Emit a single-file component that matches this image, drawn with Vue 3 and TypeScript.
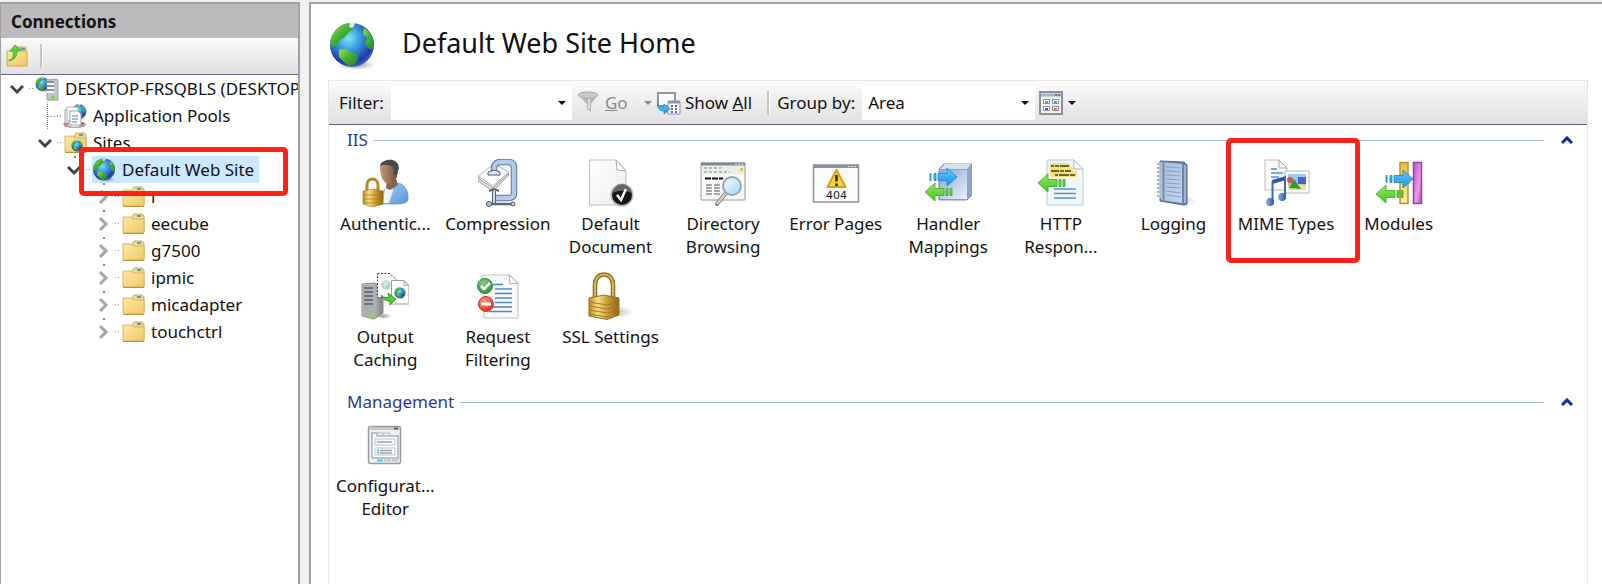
<script setup lang="ts">
import { ref } from 'vue'

interface TreeNode {
  label: string
  icon: string
  depth: number
  state: 'open' | 'closed' | 'leaf'
  selected?: boolean
  marked?: boolean
}

interface Feature {
  label: string
  icon: string
  marked?: boolean
}

interface FeatureGroup {
  title: string
  items: Feature[]
}

const nodes: TreeNode[] = [
  { label: 'DESKTOP-FRSQBLS (DESKTOP-FRSQBLS\\Admin)', icon: 'server', depth: 0, state: 'open' },
  { label: 'Application Pools', icon: 'pools', depth: 1, state: 'leaf' },
  { label: 'Sites', icon: 'sites', depth: 1, state: 'open' },
  { label: 'Default Web Site', icon: 'globe', depth: 2, state: 'open', selected: true, marked: true },
  { label: 'l', icon: 'folder', depth: 3, state: 'closed' },
  { label: 'eecube', icon: 'folder', depth: 3, state: 'closed' },
  { label: 'g7500', icon: 'folder', depth: 3, state: 'closed' },
  { label: 'ipmic', icon: 'folder', depth: 3, state: 'closed' },
  { label: 'micadapter', icon: 'folder', depth: 3, state: 'closed' },
  { label: 'touchctrl', icon: 'folder', depth: 3, state: 'closed' },
]

const groups: FeatureGroup[] = [
  {
    title: 'IIS',
    items: [
      { label: 'Authentic...', icon: 'auth' },
      { label: 'Compression', icon: 'compression' },
      { label: 'Default\nDocument', icon: 'document' },
      { label: 'Directory\nBrowsing', icon: 'directory' },
      { label: 'Error Pages', icon: 'error' },
      { label: 'Handler\nMappings', icon: 'handler' },
      { label: 'HTTP\nRespon...', icon: 'http' },
      { label: 'Logging', icon: 'logging' },
      { label: 'MIME Types', icon: 'mime', marked: true },
      { label: 'Modules', icon: 'modules' },
      { label: 'Output\nCaching', icon: 'caching' },
      { label: 'Request\nFiltering', icon: 'filtering' },
      { label: 'SSL Settings', icon: 'ssl' },
    ],
  },
  { title: 'Management', items: [{ label: 'Configurat...\nEditor', icon: 'config' }] },
]

const filter = ref('')
const groupBy = ref('Area')
</script>

<template>
  <svg class="sprite" aria-hidden="true">
    <defs>
      <linearGradient id="gold" x1="0" x2="1" y1="0" y2="0">
        <stop offset="0" stop-color="#b98a1f" /><stop offset=".3" stop-color="#f6df85" />
        <stop offset=".6" stop-color="#cf9f33" /><stop offset="1" stop-color="#8e6412" />
      </linearGradient>
      <linearGradient id="folder-face" x1="0" x2="1" y1="0" y2="1">
        <stop offset="0" stop-color="#fdeaa8" /><stop offset="1" stop-color="#eec763" />
      </linearGradient>
      <radialGradient id="ocean" cx=".42" cy=".35" r=".65">
        <stop offset="0" stop-color="#7fe3f8" /><stop offset=".4" stop-color="#3a9de0" />
        <stop offset=".85" stop-color="#2238a8" /><stop offset="1" stop-color="#3a62c4" />
      </radialGradient>
      <linearGradient id="land" x1="0" x2="1" y1="0" y2="1">
        <stop offset="0" stop-color="#a6e04c" /><stop offset=".5" stop-color="#3fae32" /><stop offset="1" stop-color="#1c8426" />
      </linearGradient>
      <linearGradient id="green-arrow" x1="0" x2="0" y1="0" y2="1">
        <stop offset="0" stop-color="#98e86a" /><stop offset="1" stop-color="#3fc41e" />
      </linearGradient>
      <linearGradient id="blue-arrow" x1="0" x2="0" y1="0" y2="1">
        <stop offset="0" stop-color="#62caf9" /><stop offset="1" stop-color="#1897ea" />
      </linearGradient>
      <linearGradient id="steel" x1="0" x2="1" y1="0" y2="0">
        <stop offset="0" stop-color="#f4f5f6" /><stop offset="1" stop-color="#7d848a" />
      </linearGradient>
      <linearGradient id="paper" x1="0" x2="1" y1="0" y2="1">
        <stop offset="0" stop-color="#ffffff" /><stop offset="1" stop-color="#ececec" />
      </linearGradient>
      <linearGradient id="skin" x1="0" x2="1"><stop offset="0" stop-color="#c79a78" /><stop offset="1" stop-color="#704a35" /></linearGradient>
      <linearGradient id="shirt" x1="0" x2="1" y1="0" y2="1"><stop offset="0" stop-color="#a8d1f5" /><stop offset="1" stop-color="#5595d8" /></linearGradient>
      <linearGradient id="box" x1="0" x2="1" y1="0" y2="1"><stop offset="0" stop-color="#8aa6d2" /><stop offset="1" stop-color="#eaf2fc" /></linearGradient>
      <linearGradient id="book" x1="0" x2="1" y1="0" y2="1"><stop offset="0" stop-color="#a4bcdd" /><stop offset="1" stop-color="#c3d7ee" /></linearGradient>
      <linearGradient id="lens" x1="0" x2="1" y1="0" y2="1"><stop offset="0" stop-color="#f2fbff" /><stop offset="1" stop-color="#a9d6f5" /></linearGradient>
      <linearGradient id="magenta" x1="0" x2="1" y1="0" y2="1"><stop offset="0" stop-color="#c54fc4" /><stop offset=".6" stop-color="#e79ae5" /><stop offset="1" stop-color="#c04cc0" /></linearGradient>
      <linearGradient id="yellow" x1="0" x2="0" y1="0" y2="1"><stop offset="0" stop-color="#e8bd3e" /><stop offset="1" stop-color="#fff0a0" /></linearGradient>
      <linearGradient id="note" x1="0" x2="1"><stop offset="0" stop-color="#8fb4f0" /><stop offset="1" stop-color="#2b4ea6" /></linearGradient>
      <radialGradient id="ball-green" cx=".4" cy=".3" r=".8"><stop offset="0" stop-color="#8bd08a" /><stop offset="1" stop-color="#248a2c" /></radialGradient>
      <radialGradient id="ball-red" cx=".4" cy=".3" r=".8"><stop offset="0" stop-color="#ff9a78" /><stop offset="1" stop-color="#d02a10" /></radialGradient>
      <radialGradient id="shade"><stop offset="0" stop-color="#000" stop-opacity=".4" /><stop offset="1" stop-color="#000" stop-opacity="0" /></radialGradient>
    </defs>

    <symbol id="i-globe" viewBox="0 0 48 48">
      <ellipse cx="28" cy="43" rx="19" ry="5" fill="url(#shade)" />
      <circle cx="24" cy="23" r="22" fill="url(#ocean)" />
      <path d="M6 10C10 4 17 1 22 1l1 4 3 1-5 4-4 5-5 3-3 6-4 1-3-3C2 17 4 13 6 10z" fill="url(#land)" />
      <path d="M22 1h5l-1 3-2 2-3-1z" fill="#d8f0f4" />
      <path d="M11 28l6-1 6 3 7 3 0 5-4 5-5 1-5-4-5-5z" fill="url(#land)" />
      <path d="M36 6l5 4 4 7 1 6-2 5-4-2-3-5 2-5-4-4z" fill="url(#land)" />
    </symbol>

    <symbol id="i-folder" viewBox="0 0 24 24">
      <path d="M11 5l2-3h8l2 2v16h-12z" fill="#f3d88c" stroke="#d4aa55" />
      <path d="M16 4h4" stroke="#4aa0d0" stroke-width="2" />
      <path d="M2 5h8l2 2h11v14H2z" fill="url(#folder-face)" stroke="#dbb25a" />
      <path d="M2 21.500h21" stroke="#b98f42" />
    </symbol>

    <symbol id="i-sites" viewBox="0 0 24 24">
      <use href="#i-folder" width="24" height="24" />
      <use href="#i-globe" x="8" y="9" width="12" height="12" />
    </symbol>

    <symbol id="i-server" viewBox="0 0 24 24">
      <use href="#i-globe" x="0" y="0" width="15" height="15" />
      <path d="M12 3l9-1 2 1v20H12z" fill="#c0c6c9" stroke="#9aa1a4" />
      <path d="M12 5h7M12 9h7M12 13h7" stroke="#5a6266" />
      <path d="M12 7h7M12 11h7M12 15h7" stroke="#f2f4f5" stroke-width="2" />
      <circle cx="18" cy="20" r="2" fill="#6be12d" />
    </symbol>

    <symbol id="i-pools" viewBox="0 0 24 24">
      <use href="#i-globe" x="8" y="0" width="16" height="16" />
      <path d="M0 20l4-2 3 5H3zM23 20l-4-2-3 5h5z" fill="#d9342b" />
      <path d="M2 20c5 5 15 5 20 0" fill="none" stroke="#a9b4b8" stroke-width="2" />
      <path d="M2 6h11v13H2z" fill="#f3f3f3" stroke="#a2a2a2" />
      <path d="M4 3h11v14H4z" fill="#f8f8f8" stroke="#b2b2b2" />
      <path d="M7 7h8l3 3v11H7z" fill="#fff" stroke="#a2a2a2" />
      <path d="M9 12h6M9 15h6M9 18h5" stroke="#4b82c4" />
    </symbol>

    <symbol id="i-up" viewBox="0 0 24 24">
      <path d="M13 5l2-2h7v18H13z" fill="#f0cd72" stroke="#d4aa55" />
      <path d="M17 5h4" stroke="#4aa0d0" stroke-width="2" />
      <path d="M3 7h20v15H3z" fill="url(#folder-face)" stroke="#d0a44c" />
      <path d="M5 16c4-1 5-4 4-9H6l5-6 6 5-4 1c0 6-3 9-8 10z" fill="#5ccf3c" stroke="#36a528" stroke-width=".8" />
    </symbol>

    <symbol id="i-funnel" viewBox="0 0 24 24">
      <ellipse cx="11" cy="4" rx="10" ry="3" fill="#c9c9c9" stroke="#aaa" />
      <path d="M1 4c4 4 16 4 20 0l-7 9v8l-4-3v-5z" fill="#b5b5b5" />
      <path d="M12 8v10" stroke="#ddd" stroke-width="2" />
    </symbol>

    <symbol id="i-showall" viewBox="0 0 24 24">
      <path d="M1 2h17v13H1z" fill="#fff" stroke="#8d969c" stroke-width="2" />
      <path d="M11 11h12v12H11z" fill="#fff" stroke="#8d969c" />
      <path d="M11 11h12" stroke="#8d969c" stroke-width="3" />
      <path d="M14 15h2m2 0h2m-6 3h2m2 0h2m-6 3h2m2 0h2" stroke="#5a6fc0" stroke-width="2" />
      <path d="M1 12c0 4 2 4 6 4v-3l6 5-6 5v-3C2 20 0 17 1 12z" fill="url(#blue-arrow)" stroke="#1e7db8" stroke-width=".6" />
    </symbol>

    <symbol id="i-view" viewBox="0 0 24 24">
      <path d="M1 1h22v22H1z" fill="#eef0f1" stroke="#8c9298" stroke-width="2" />
      <path d="M2 4h20" stroke="#a9b4c2" stroke-width="3" />
      <path d="M16 4h5" stroke="#68809f" stroke-width="2" stroke-dasharray="2 1" />
      <path d="M4.500 8.500h6v4h-6zM13.500 8.500h6v4h-6zM4.500 15.500h6v4h-6zM13.500 15.500h6v4h-6z" fill="#fff" stroke="#8a9097" />
      <path d="M6 10h3v2H6z" fill="#79b638" /><path d="M15 10h3v2h-3z" fill="#38a8e6" />
      <path d="M6 17h3v2H6z" fill="#5a4acb" /><path d="M15 17h3v2h-3z" fill="#e36a43" />
    </symbol>

    <symbol id="i-green" viewBox="0 0 30 20">
      <path d="M1 10L11 1v5.500h9v7h-9V19zM22 6.500h2v7h-2zM26 6.500h2v7h-2z" fill="url(#green-arrow)" stroke="#38a822" stroke-width=".8" />
    </symbol>
    <symbol id="i-blue" viewBox="0 0 30 20">
      <path d="M29 10L19 1v5.500h-9v7h9V19zM6 6.500h2v7H6zM2 6.500h1v7H2z" fill="url(#blue-arrow)" stroke="#2380c0" stroke-width=".8" />
    </symbol>

    <symbol id="i-auth" viewBox="0 0 48 48">
      <path d="M20 45c0-10 2-16 9-18l8-3c7 1 11 9 10 17-1 3-6 4-12 4z" fill="url(#shirt)" stroke="#4f88c4" stroke-width=".6" />
      <path d="M24 30l7-4 1 6-4 12h-6z" fill="#eef4fa" />
      <path d="M26 20h9l2 6-8 5-4-2z" fill="#8a6048" />
      <path d="M19 7c1-6 17-8 18 1l-1 9c-1 5-4 8-8 8-6-1-9-7-9-18z" fill="url(#skin)" />
      <path d="M19 7c1-7 18-10 19 2l-3 9-2-4c1-5-1-7-5-8-3 0-6-1-9 1z" fill="#46484a" />
      <path d="M6 33v-7c0-8 11-8 11 0v7" fill="none" stroke="#b48a2b" stroke-width="3" />
      <path d="M2 32l10-2 10 2v13l-10 3-10-3z" fill="url(#gold)" stroke="#9a721d" stroke-width=".6" />
      <path d="M3 36h18M3 40h18M3 44h18" stroke="#a97f23" stroke-width=".8" />
    </symbol>

    <symbol id="i-compression" viewBox="0 0 48 48">
      <path d="M4 22l16-15 15 9-16 16z" fill="#e6e6e6" stroke="#999" /><path d="M4 19l16-14 15 9-16 15z" fill="#f1f1f1" stroke="#999" />
      <path d="M4 17L20 5l15 8-16 14z" fill="#fcfcfc" stroke="#b6b6b6" />
      <path d="M20 14V9c0-4 3-6 7-6h7c4 0 6 2 6 6v25c0 4-2 5-6 5H19" fill="none" stroke="#60789c" stroke-width="6.500" />
      <path d="M20 14V9c0-4 3-6 7-6h7c4 0 6 2 6 6v25c0 4-2 5-6 5H19" fill="none" stroke="#b5cae6" stroke-width="4.500" />
      <path d="M14 13l6-2 6 2v3H14z" fill="#dce6f0" stroke="#4b5c70" />
      <path d="M20 32v13" stroke="#55636f" stroke-width="4" /><path d="M20 32v13" stroke="#d9dfe4" stroke-width="2" />
      <path d="M15 32l5-2 5 2" stroke="#59656f" stroke-width="2" fill="none" />
      <path d="M14 45h25" stroke="#5d6670" stroke-width="2.500" />
      <circle cx="15" cy="45" r="2.500" fill="#bcc5cc" stroke="#555" /><circle cx="39" cy="45" r="2" fill="#ccd2d8" stroke="#555" />
    </symbol>

    <symbol id="i-document" viewBox="0 0 48 48">
      <path d="M3.500 1H30l10 11v34H3.500z" fill="url(#paper)" stroke="#bcbcbc" />
      <path d="M30 1l1 10 9 1z" fill="#fff" stroke="#aaa" />
      <circle cx="36" cy="36" r="11.500" fill="#b8b8b8" /><circle cx="36" cy="36" r="10" fill="#151515" />
      <path d="M27 34a9 9 0 0 1 18 0c-5-3-13-3-18 0z" fill="#666" />
      <path d="M31 36l4 5 5-11" fill="none" stroke="#fff" stroke-width="2.500" />
    </symbol>

    <symbol id="i-directory" viewBox="0 0 48 48">
      <path d="M2 4h44v37H2z" fill="#f8f8f6" stroke="#989898" />
      <path d="M2 5h44" stroke="#7c8a9c" stroke-width="3" /><path d="M36 5h8" stroke="#e4ebf2" stroke-dasharray="2 1" />
      <path d="M3 7h42v8H3z" fill="#eeeee8" />
      <path d="M5 9h17M5 13h26" stroke="#a5a798" stroke-width="1.500" stroke-dasharray="3 2" />
      <path d="M41 9h3v3h-3z" fill="#f0c04b" />
      <path d="M6 19.500h18" stroke="#111" stroke-width="2" stroke-dasharray="6 1" />
      <path d="M7 26h6m2 0h6M7 29h6m2 0h6M7 32h6m2 0h6M7 35h6m2 0h6" stroke="#555" />
      <path d="M18 45l9-11" stroke="#808080" stroke-width="4" stroke-linecap="round" /><path d="M18 45l9-11" stroke="#d8d8d8" stroke-width="2" />
      <circle cx="33" cy="27" r="9" fill="url(#lens)" stroke="#95a7ba" stroke-width="2" />
    </symbol>

    <symbol id="i-error" viewBox="0 0 48 48">
      <path d="M1.500 6h45v37h-45z" fill="#fafafa" stroke="#929292" stroke-width="1.500" />
      <path d="M2 7.500h44" stroke="#8494a8" stroke-width="3" /><path d="M36 7.500h9" stroke="#dce6f0" stroke-dasharray="2 1" />
      <path d="M24.500 11l9 17h-18z" fill="#fbd535" stroke="#cfa314" stroke-width="2" stroke-linejoin="round" />
      <path d="M24.500 16v6.500m0 2v2.500" stroke="#222" stroke-width="2.500" />
      <text x="24.500" y="40" text-anchor="middle" class="code">404</text>
    </symbol>

    <symbol id="i-handler" viewBox="0 0 48 48">
      <path d="M15 10l5-5h28v31l-5 5H15z" fill="#8fa4c8" stroke="#7e93b8" stroke-linejoin="round" />
      <path d="M16 10l5-5h26l-4 5z" fill="#d4e2f4" /><path d="M16 11h27v29H16z" fill="url(#box)" />
      <use href="#i-blue" x="4" y="8" width="30" height="20" /><use href="#i-green" x="0" y="23" width="30" height="20" />
    </symbol>

    <symbol id="i-http" viewBox="0 0 48 48">
      <path d="M10 1h27l9 9v36H10z" fill="#eff7fa" stroke="#bccacf" /><path d="M37 1v9h9z" fill="#fff" stroke="#b3b3b3" />
      <path d="M13 4h20v4h3v4h4v6H13z" fill="#f7e277" />
      <path d="M14 7h3m1 0h4m1 0h9M14 12h8m1 0h4m1 0h6M18 16h3m1 0h10m1 0h5" stroke="#3f3b1e" stroke-width="1.500" />
      <path d="M17 30h22M17 34.500h22M17 39h22" stroke="#5495c9" stroke-width="1.500" />
      <use href="#i-green" x="0" y="14" width="30" height="20" />
    </symbol>

    <symbol id="i-logging" viewBox="0 0 48 48">
      <ellipse cx="34" cy="42" rx="13" ry="5" fill="url(#shade)" opacity=".5" />
      <path d="M11 2l24 1 3 3v39l-3 1-24-4z" fill="#6b82aa" stroke="#51678f" />
      <path d="M36 6v38" stroke="#e3ebf5" />
      <path d="M12 3l21 2v39l-21-3z" fill="url(#book)" />
      <path d="M17 8l15 1M17 12l15 1M17 16l15 1M17 20l15 1M17 24l15 1M17 28l15 1M17 32l15 2M17 36l15 2" stroke="#86a3cc" />
      <path d="M14.500 3v38" stroke="#7089b3" stroke-width="2" />
      <path d="M8 5h4M8 9h4M8 13h4M8 17h4M8 21h4M8 25h4M8 29h4M8 33h4M8 37h4" stroke="#f2f4f6" stroke-width="3" />
      <path d="M8 5h4M8 9h4M8 13h4M8 17h4M8 21h4M8 25h4M8 29h4M8 33h4M8 37h4" stroke="#6d7a8c" stroke-width="1.200" />
    </symbol>

    <symbol id="i-mime" viewBox="0 0 48 48">
      <path d="M3 1h14l8 8v22H3z" fill="#fafafa" stroke="#bbb" /><path d="M17 1v8h8z" fill="#fff" stroke="#aaa" />
      <path d="M9 10h6M9 14h12M9 18h8" stroke="#5b8ec4" stroke-width="1.500" />
      <path d="M23 12h24v22H23z" fill="#fff" stroke="#b5b5b5" /><path d="M26 15h18v16H26z" fill="#8ecbf6" />
      <path d="M36 18h8v7h-8z" fill="#4d5fcb" /><path d="M26 27l6-2 12 1v5H26z" fill="#efe08a" /><path d="M27 29l5-9 7 10z" fill="#2e9c2c" />
      <circle cx="28" cy="21" r="3" fill="#e0503a" />
      <path d="M10 21l14-4v4l-14 4z" fill="#2f55a8" />
      <path d="M10.500 22v20M23 18v19" stroke="#3f66b8" stroke-width="2" />
      <ellipse cx="8" cy="43" rx="4" ry="4" fill="url(#note)" /><ellipse cx="20" cy="38" rx="4" ry="4" fill="url(#note)" />
    </symbol>

    <symbol id="i-modules" viewBox="0 0 48 48">
      <path d="M25 3.500h8v41h-8z" fill="url(#yellow)" stroke="#bb922b" stroke-width="1.500" />
      <path d="M38.500 3.500h8v41h-8z" fill="url(#magenta)" stroke="#a03ba4" stroke-width="1.500" />
      <use href="#i-blue" x="9" y="10" width="30" height="20" /><use href="#i-green" x="0" y="25" width="30" height="20" />
    </symbol>

    <symbol id="i-caching" viewBox="0 0 48 48">
      <ellipse cx="22" cy="44" rx="9" ry="3" fill="url(#shade)" />
      <path d="M1 12l12-1 9 3v27l-9 6-12-3z" fill="url(#steel)" stroke="#888" />
      <path d="M1 12l12 1v33l-12-2z" fill="#aab0b2" /><path d="M3 16h9M3 20h9M3 24h9M3 28h9M3 32h9" stroke="#596064" stroke-width="1.500" />
      <circle cx="10" cy="43" r="2" fill="#83e51c" />
      <path d="M16.500 1.500H29l6 6v18H16.500z" fill="#fff" stroke="#444" stroke-dasharray="2 1.500" />
      <use href="#i-globe" x="20" y="8" width="10" height="10" opacity=".35" />
      <path d="M30.500 8.500H43l5 5V32H30.500z" fill="#fff" stroke="#999" /><path d="M43 8.500v5h5z" fill="#eee" stroke="#aaa" />
      <use href="#i-globe" x="33" y="15" width="12" height="12" />
      <path d="M20 23c3 3 5 3 8 2l-1-4 8 6-6 6v-4c-5 0-7-2-9-6z" fill="#55c936" stroke="#3ba323" />
    </symbol>

    <symbol id="i-filtering" viewBox="0 0 48 48">
      <path d="M8 3h28l8 8v35H10z" fill="#f9f9f9" stroke="#c3c3c3" /><path d="M35 3l1 9 8-1z" fill="#fff" stroke="#aaa" />
      <path d="M19 12.500h10M21 17h17M21 21.500h17M21 26h17M21 30.500h17M19 35h19M15 39.500h23" stroke="#4c89c8" stroke-width="1.500" />
      <circle cx="11" cy="14" r="7.500" fill="url(#ball-green)" stroke="#358739" /><path d="M7 14l3 3 6-6" fill="none" stroke="#fff" stroke-width="2.500" />
      <circle cx="12" cy="32" r="7.500" fill="url(#ball-red)" stroke="#c13a20" /><path d="M7 32h10" stroke="#fff" stroke-width="3" />
    </symbol>

    <symbol id="i-ssl" viewBox="0 0 48 48">
      <ellipse cx="32" cy="40" rx="15" ry="6" fill="url(#shade)" opacity=".6" />
      <path d="M9 27V13C9 -1 27 -1 27 13v14" fill="none" stroke="#8f6d22" stroke-width="4.500" />
      <path d="M9 27V13C9 -1 27 -1 27 13v14" fill="none" stroke="#d8b65c" stroke-width="2" />
      <path d="M3 26l15-3 15 3v17l-12 4.500-18-3.500z" fill="url(#gold)" stroke="#94701f" />
      <path d="M3 30l18 3 12-3M3 34l18 3 12-3M3 38l18 3 12-3M3 42l18 3 12-3" fill="none" stroke="#a67b23" />
    </symbol>

    <symbol id="i-config" viewBox="0 0 48 48">
      <rect x="7.500" y="5.500" width="32" height="37" rx="2" fill="#eef0f1" stroke="#969a9d" stroke-width="1.500" />
      <path d="M8 7.500h31" stroke="#c3c7ca" stroke-width="3" /><path d="M33 7.500h4" stroke="#4f6688" stroke-width="2" />
      <path d="M11 37V12h5v3h21v22z" fill="#fff" stroke="#a8b0ba" stroke-width="1.500" /><path d="M16 12h13v3M22 12v3" fill="none" stroke="#b8bec5" />
      <path d="M14 18h20v6H14zM14 27h20v7H14z" fill="#fff" stroke="#b8bec5" />
      <path d="M16 21h15M19 29.500h12M19 32h12" stroke="#a2a4a6" stroke-width="1.500" /><path d="M16 29h2M16 32h2" stroke="#36bde8" stroke-width="1.500" />
      <path d="M16 39.500h6" stroke="#3fd0f5" stroke-width="2" /><path d="M23 39.500h7M31 39.500h6" stroke="#bec2c5" stroke-width="2" />
    </symbol>
  </svg>

  <div class="window">
    <aside class="connections">
      <h2 class="connections-title">Connections</h2>
      <div class="tree-toolbar">
        <button class="flat" type="button" aria-label="Up"><svg class="icon-sm"><use href="#i-up" /></svg></button>
        <span class="separator"></span>
      </div>
      <ul class="tree">
        <li v-for="node in nodes" :key="node.label" class="node" :class="['depth-' + node.depth, { marked: node.marked }]">
          <button v-if="node.state !== 'leaf'" class="flat toggle" type="button" :aria-label="'Toggle ' + node.label">
            <svg class="chevron" :class="node.state" viewBox="0 0 14 14"><path d="M1 4l6 6 6-6" /></svg>
          </button>
          <span v-else class="toggle elbow"></span>
          <span class="dots"></span>
          <a href="#" class="node-link">
            <svg class="icon-sm"><use :href="'#i-' + node.icon" /></svg>
            <span class="node-label">{{ node.label }}</span>
          </a>
        </li>
      </ul>
    </aside>

    <main class="content">
      <header class="page-head">
        <svg class="icon-lg"><use href="#i-globe" /></svg>
        <h1>Default Web Site Home</h1>
      </header>
      <div class="features">
        <div class="toolbar">
          <label for="filter">Filter:</label>
          <div class="combo filter-combo">
            <input id="filter" v-model="filter" type="text" />
            <svg class="caret" viewBox="0 0 8 4"><path d="M0 0h8L4 4z" /></svg>
          </div>
          <button class="flat go" type="button" disabled>
            <svg class="icon-sm"><use href="#i-funnel" /></svg>
            <span><u>G</u>o</span>
            <svg class="caret" viewBox="0 0 8 4"><path d="M0 0h8L4 4z" /></svg>
          </button>
          <button class="flat show-all" type="button">
            <svg class="icon-sm"><use href="#i-showall" /></svg>
            <span>Show <u>A</u>ll</span>
          </button>
          <span class="separator"></span>
          <label for="group">Group by:</label>
          <div class="combo group-combo">
            <select id="group" v-model="groupBy">
              <option>Area</option>
              <option>Category</option>
              <option>No Grouping</option>
            </select>
            <svg class="caret" viewBox="0 0 8 4"><path d="M0 0h8L4 4z" /></svg>
          </div>
          <button class="flat view" type="button" aria-label="View">
            <svg class="icon-sm"><use href="#i-view" /></svg>
            <svg class="caret" viewBox="0 0 8 4"><path d="M0 0h8L4 4z" /></svg>
          </button>
        </div>

        <section v-for="group in groups" :key="group.title" class="group">
          <div class="group-head">
            <h2>{{ group.title }}</h2>
            <span class="rule"></span>
            <button class="flat collapse" type="button" :aria-label="'Collapse ' + group.title">
              <svg viewBox="0 0 12 8"><path d="M1 7l5-5 5 5" /></svg>
            </button>
          </div>
          <div class="tiles">
            <a v-for="item in group.items" :key="item.label" href="#" class="tile" :class="{ marked: item.marked }">
              <svg class="icon-xl"><use :href="'#i-' + item.icon" /></svg>
              <span class="tile-label">{{ item.label }}</span>
            </a>
          </div>
        </section>
      </div>
    </main>
  </div>
</template>

<style>
body {
  margin: 0;
  background: #f0f0f0;
}
</style>

<style scoped>
.sprite {
  position: absolute;
  width: 0;
  height: 0;
}
.code {
  font: 11px "DejaVu Sans", sans-serif;
  fill: #222;
}
.window {
  box-sizing: border-box;
  display: flex;
  gap: 9px;
  min-height: 100vh;
  padding-top: 2px;
  background: #f0f0f0;
  color: #111;
  font: 17px/22px "Noto Sans", "Open Sans", sans-serif;
}
h1,
h2 {
  margin: 0;
  font-weight: 400;
}
a {
  color: inherit;
  text-decoration: none;
}
.flat {
  display: flex;
  align-items: center;
  padding: 0;
  border: 0;
  background: none;
  color: inherit;
  font: inherit;
}
.icon-sm {
  flex: none;
  width: 24px;
  height: 24px;
}
.separator {
  width: 2px;
  height: 24px;
  border-right: 1px solid #fff;
  background: #c6c5b6;
}

.connections {
  box-sizing: border-box;
  flex: none;
  width: 300px;
  border: solid #a0a0a0;
  border-width: 2px 2px 0 1px;
  background: #fff;
  overflow: hidden;
}
.connections-title {
  padding: 7px 10px 5px;
  background: #bcbabc;
  font-size: 17px;
  line-height: 22px;
  font-weight: 700;
}
.tree-toolbar {
  display: flex;
  align-items: center;
  gap: 12px;
  height: 36px;
  padding-left: 3px;
  border-bottom: 1px solid #6a648e;
  background: linear-gradient(#fafafa, #e2e0e2);
}
.tree {
  margin: 0;
  padding: 0;
  list-style: none;
}
.node {
  position: relative;
  display: flex;
  align-items: center;
  height: 27px;
  padding-left: 8px;
}
.depth-1 {
  padding-left: 36px;
}
.depth-2 {
  padding-left: 65px;
}
.depth-3 {
  padding-left: 94px;
}
.depth-2,
.depth-3 {
  background: linear-gradient(#888, #888) 73px 0 / 2px 2px no-repeat;
}
.depth-3 {
  background-position: 102px 0;
}
.toggle {
  flex: none;
  justify-content: center;
  width: 16px;
  height: 27px;
}
.elbow {
  box-sizing: border-box;
  border-left: 1px dotted #888;
  margin-left: 10px;
  margin-right: -10px;
  background: repeating-linear-gradient(90deg, #999 0 1px, transparent 1px 3px) 0 14px / 16px 1px no-repeat;
}
.chevron {
  width: 14px;
  height: 14px;
  fill: none;
  stroke: #444;
  stroke-width: 3;
}
.chevron.closed {
  transform: rotate(-90deg);
  stroke: #a6a6a6;
}
.dots {
  flex: none;
  width: 6px;
  height: 1px;
  margin-left: 4px;
  background: repeating-linear-gradient(90deg, #999 0 1px, transparent 1px 3px);
}
.node-link {
  display: flex;
  align-items: center;
  gap: 6px;
  height: 27px;
  padding-right: 5px;
  white-space: nowrap;
}
.marked .node-link {
  background: #cce8ff;
}
.node.marked::after {
  content: "";
  position: absolute;
  z-index: 1;
  inset: -9px 10px -13px 78px;
  border: 5px solid #ff2113;
  border-radius: 5px;
  pointer-events: none;
}

.content {
  box-sizing: border-box;
  flex: 1;
  min-width: 0;
  display: flex;
  flex-direction: column;
  padding: 15px 14px 0 17px;
  border: solid #a0a0a0;
  border-width: 2px 0 0 2px;
  background: #fff;
}
.page-head {
  display: flex;
  align-items: center;
  gap: 26px;
  height: 61px;
}
.page-head h1 {
  margin-bottom: 14px;
  font-size: 27px;
  line-height: 36px;
}
.icon-lg {
  width: 48px;
  height: 48px;
  margin-bottom: 8px;
}
.features {
  flex: 1;
  border: solid #e6e6e6;
  border-width: 1px 1px 0;
}
.toolbar {
  display: flex;
  align-items: center;
  height: 43px;
  padding-left: 10px;
  border-bottom: 1px solid #5f5a86;
  background: linear-gradient(#fbfbfb, #e2e0e2);
  white-space: nowrap;
}
.toolbar label {
  margin-right: 7px;
}
.combo {
  display: flex;
  align-items: center;
  height: 34px;
  padding-right: 6px;
  background: #fff;
}
.combo input,
.combo select {
  flex: 1;
  width: 100%;
  min-width: 0;
  height: 34px;
  padding: 0 6px;
  border: 0;
  background: transparent;
  color: inherit;
  font: inherit;
  appearance: none;
}
.combo select {
  margin-right: -14px;
  padding-right: 14px;
}
.caret {
  flex: none;
  width: 8px;
  height: 4px;
  fill: currentColor;
}
.filter-combo {
  width: 175px;
}
.group-combo {
  width: 167px;
}
.go {
  width: 80px;
  margin-left: 5px;
  gap: 4px;
  color: #8a8a8a;
}
.go .caret {
  margin-left: auto;
  margin-right: 5px;
}
.show-all {
  gap: 4px;
}
.toolbar .separator {
  margin: 0 7px 0 15px;
}
.view {
  margin-left: 4px;
  gap: 5px;
}
.group-head {
  display: flex;
  align-items: center;
  height: 22px;
  padding: 4px 14px 8px 18px;
}
.group-head h2 {
  color: #2b3a96;
  font-size: 17px;
  line-height: 22px;
}
.rule {
  flex: 1;
  height: 1px;
  margin: 0 17px 0 6px;
  background: #a9b9de;
}
.collapse svg {
  width: 12px;
  height: 8px;
  fill: none;
  stroke: #0b3093;
  stroke-width: 3;
}
.tiles {
  display: grid;
  grid-template-columns: repeat(10, 1fr);
  margin-right: 132px;
  padding-bottom: 2px;
}
.tile {
  position: relative;
  display: flex;
  flex-direction: column;
  align-items: center;
  gap: 5px;
  height: 113px;
}
.icon-xl {
  flex: none;
  width: 48px;
  height: 48px;
}
.tile-label {
  line-height: 23px;
  text-align: center;
  white-space: pre-line;
}
.tile.marked::after {
  content: "";
  position: absolute;
  inset: -21px -18px 9px -4px;
  border: 5px solid #ff2113;
  border-radius: 5px;
  pointer-events: none;
}
</style>
